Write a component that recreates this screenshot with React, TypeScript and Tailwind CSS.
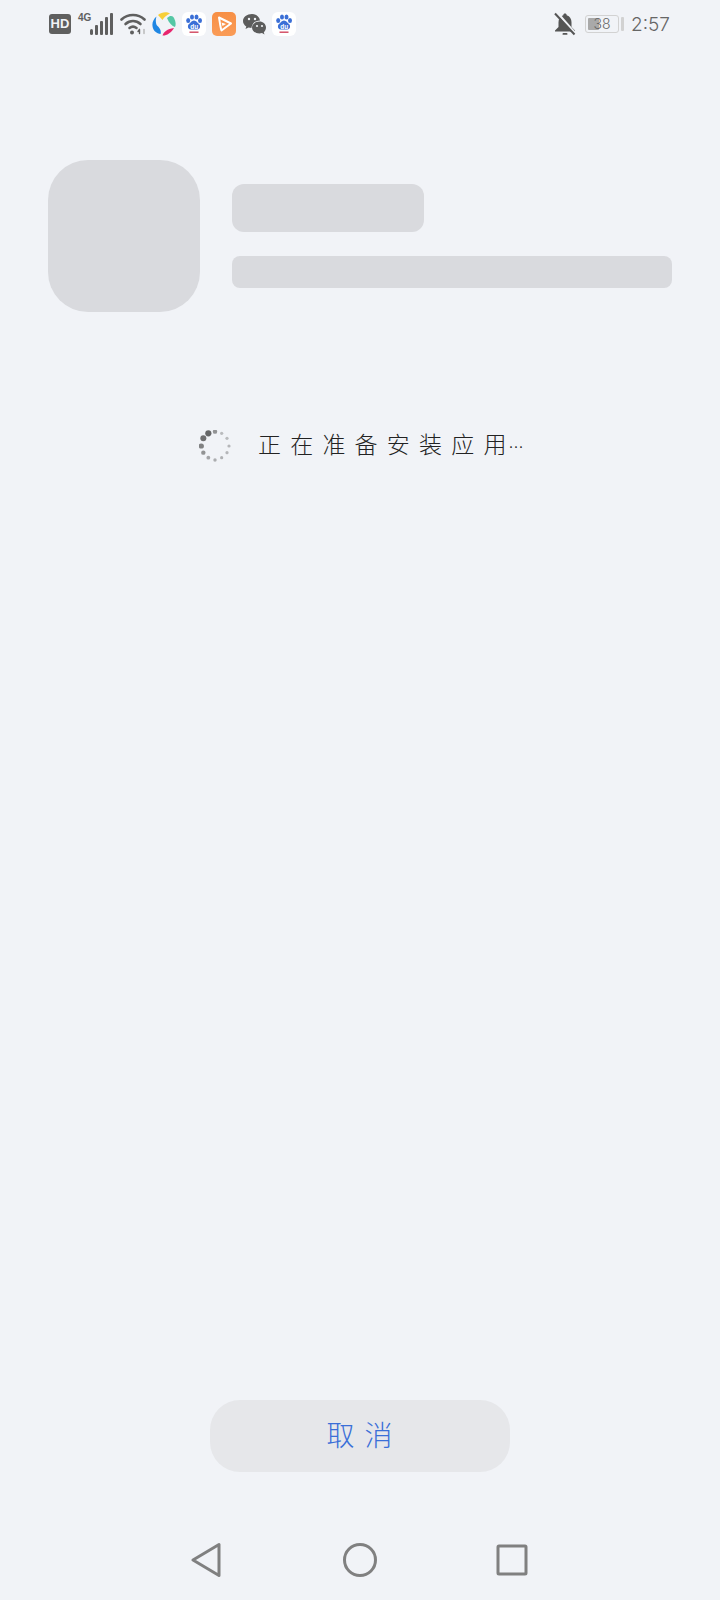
import React from 'react';

const CJK = '[font-family:"Noto_Sans_CJK_SC","Noto_Sans_CJK_TC",sans-serif]';

const spinnerDots = [
  { x: 77, y: 32, r: 2.2, o: 0.55 },
  { x: 57, y: 37, r: 3.1, o: 0.8 },
  { x: 42, y: 52, r: 3, o: 0.75 },
  { x: 36, y: 75, r: 2.6, o: 0.65 },
  { x: 42, y: 95, r: 2.2, o: 0.55 },
  { x: 57, y: 110, r: 1.9, o: 0.45 },
  { x: 77, y: 117, r: 1.7, o: 0.4 },
  { x: 97, y: 110, r: 1.6, o: 0.38 },
  { x: 113, y: 95, r: 1.6, o: 0.35 },
  { x: 119, y: 75, r: 1.6, o: 0.35 },
  { x: 113, y: 52, r: 1.6, o: 0.32 },
  { x: 97, y: 37, r: 1.6, o: 0.32 },
];

const Spinner = () => (
  <svg width="32" height="32" viewBox="29 27 96 96" className="shrink-0">
    {spinnerDots.map((d, i) => (
      <circle key={i} cx={d.x} cy={d.y} r={d.r * 3} fill="#444" opacity={d.o} />
    ))}
  </svg>
);

const SignalBars = () => (
  <svg width="23" height="22" viewBox="0 0 23 22" fill="#5f5f5f" className="shrink-0">
    <rect x="0" y="16" width="3" height="6" rx="1.5" />
    <rect x="5" y="12" width="3" height="10" rx="1" />
    <rect x="10" y="8" width="3" height="14" rx="1" />
    <rect x="15" y="4" width="3" height="18" rx="1" />
    <rect x="20" y="0" width="3" height="22" rx="1" />
  </svg>
);

const Wifi = () => (
  <svg width="27" height="22" viewBox="0 0 27 22" fill="none" stroke="#5f5f5f" strokeWidth="2.6" strokeLinecap="round" className="shrink-0">
    <path d="M1.5 6.5C8 0.5 18 0.5 24.5 6.5" />
    <path d="M5.5 11C10 7 16 7 20.5 11" />
    <path d="M9.5 15C11.5 13.5 14.5 13.5 16.5 15" />
    <circle cx="12" cy="19.5" r="2" fill="#5f5f5f" stroke="none" />
    <path d="M19.5 16.5v4M18 18.5l1.5 -2" strokeWidth="1.4" />
    <path d="M24 16.5v4" stroke="#b5b5b5" strokeWidth="1.4" />
  </svg>
);

const ColorSheet = () => (
  <svg width="24" height="24" viewBox="0 0 24 24" className="shrink-0">
    <path d="M6 3C10 -0.5 15 -0.5 18 1.5C15 3 12 5 10.5 8Z" fill="#f7cf38" />
    <path d="M15 6C18 3 21 3.5 22 6C24 10 24 13 23 15C20 14 17 11 15 6Z" fill="#55c7a5" />
    <path d="M22 16C19 21 14 24 10.5 23.5C12 19.5 15 17 22 16Z" fill="#e8246d" />
    <path d="M4.5 4.5C0 8.5 -1 14 2.5 19C4.5 21 7 22 8.5 22C9.5 19 8 16 5 13.5C3.5 11 3.5 7 4.5 4.5Z" fill="#1f86e3" />
  </svg>
);

const BaiduIcon = () => (
  <div className="relative h-6 w-6 shrink-0 rounded-[6px] bg-white">
    <svg width="24" height="24" viewBox="0 0 24 24" fill="#3b6fd6" className="absolute inset-0">
      <ellipse cx="6.2" cy="8.6" rx="2" ry="2.5" />
      <ellipse cx="10" cy="5" rx="2" ry="2.6" />
      <ellipse cx="14.5" cy="5" rx="2" ry="2.6" />
      <ellipse cx="18" cy="8.6" rx="2" ry="2.5" />
      <path d="M12 8.5c2.5 0 3.3 2.3 5 3.5 1.6 1.2 1.6 5.5 -1.8 5.5H8.8c-3.4 0 -3.4 -4.3 -1.8 -5.5 1.7 -1.2 2.5 -3.5 5 -3.5Z" />
      <rect x="7.5" y="19.5" width="9" height="1.4" fill="#d1455e" />
    </svg>
    <span className="absolute inset-x-0 top-[10.5px] text-center font-['Liberation_Sans',sans-serif] text-[6.5px] leading-[7px] font-bold text-white">du</span>
  </div>
);

const OrangeIcon = () => (
  <svg width="24" height="24" viewBox="0 0 24 24" className="shrink-0">
    <defs>
      <linearGradient id="orange" x1="0" y1="0" x2="0" y2="1">
        <stop offset="0" stopColor="#f78f45" />
        <stop offset="1" stopColor="#fa9b57" />
      </linearGradient>
    </defs>
    <rect width="24" height="24" rx="5" fill="url(#orange)" />
    <path d="M7 5.5L19 11.5L9.5 18.5C8.5 16 8 11 7 5.5Z" fill="none" stroke="#fff" strokeWidth="2" strokeLinejoin="round" />
    <path d="M9.5 10.5L14 12L10.5 14Z" fill="#fff" />
  </svg>
);

const WeChat = () => (
  <svg width="24" height="22" viewBox="0 0 24 22" fill="#5c5c5c" className="shrink-0">
    <path d="M9 1c-5 0 -9 3 -9 7 0 2.3 1.3 4.2 3.3 5.5L2.5 16l3 -1.5c1 .3 2 .5 3 .5 0 0 .6 -7.5 8.5 -7.5C16.5 3.5 13 1 9 1Z" />
    <path d="M16.5 8.5c-4 0 -7.5 2.6 -7.5 6s3.500 6 7.500 6c.8 0 1.700 -.2 2.500 -.4l2.500 1.400 -.7 -2.300c1.400 -1 2.200 -3 2.200 -4.700 0 -3.400 -3 -6 -6.500 -6Z" />
    <circle cx="6" cy="6" r="1.2" fill="#f1f3f7" />
    <circle cx="12" cy="6" r="1.2" fill="#f1f3f7" />
    <circle cx="14" cy="13" r="1.1" fill="#f1f3f7" />
    <circle cx="19" cy="13" r="1.1" fill="#f1f3f7" />
  </svg>
);

const BellMuted = () => (
  <svg width="22" height="24" viewBox="0 0 22 24" fill="#555" className="shrink-0">
    <path d="M11 1.500c-1 0 -1.700 .7 -1.700 1.700 -3.300 1 -4.800 3.800 -4.800 7v4.800L1 18.500v1h20v-1l-3.500 -3.500v-4.800c0 -3.200 -1.500 -6 -4.800 -7 0 -1 -.7 -1.700 -1.700 -1.700Z" />
    <rect x="8.500" y="21" width="5" height="1.800" rx="0.9" />
    <path d="M3 0.500L21 21" stroke="#f1f3f7" strokeWidth="2.500" />
    <path d="M1 1.500L20.500 22.500" stroke="#555" strokeWidth="2" />
  </svg>
);

const Battery = () => (
  <div className="flex shrink-0 items-center gap-[2px]">
    <div className="relative flex h-[18px] w-[34px] items-center justify-center overflow-hidden rounded-[3px] border border-[#d2d2d2]">
      <div className="absolute inset-y-[2px] left-[2px] w-[11px] rounded-[1px] bg-[#a9a9a9]" />
      <span className="relative font-['Inter',sans-serif] text-[14px] leading-none font-light text-[#666]">38</span>
    </div>
    <div className="h-[14px] w-[3px] rounded-[1px] bg-[#d2d2d2]" />
  </div>
);

const StatusBar = () => (
  <div className="flex h-12 shrink-0 items-center justify-between pr-[50px] pl-[49px]">
    <div className="flex items-center">
      <div className="flex h-5 w-[22px] items-center justify-center rounded-[3px] bg-[#5f5f5f] font-['Liberation_Sans',sans-serif] text-[13px] font-bold text-[#f1f3f7]">
        HD
      </div>
      <div className="mb-3 ml-[7px] font-['Liberation_Sans',sans-serif] text-[10px] leading-none font-bold text-[#5f5f5f]">4G</div>
      <div className="ml-[-1px]"><SignalBars /></div>
      <div className="ml-[7px]"><Wifi /></div>
      <div className="ml-[5px]"><ColorSheet /></div>
      <div className="ml-[6px]"><BaiduIcon /></div>
      <div className="ml-[6px]"><OrangeIcon /></div>
      <div className="ml-[7px]"><WeChat /></div>
      <div className="ml-[5px]"><BaiduIcon /></div>
    </div>
    <div className="flex items-center">
      <BellMuted />
      <div className="ml-[9px]"><Battery /></div>
      <span className="ml-[7px] font-['Inter',sans-serif] text-[19px] leading-none font-light text-[#666]">2:57</span>
    </div>
  </div>
);

const NavBar = () => (
  <div className="mt-[71px] flex h-[34px] items-center pl-[191px] text-[#808080]">
    <svg width="30" height="36" viewBox="0 0 30 36" fill="none" stroke="currentColor" strokeWidth="3" strokeLinejoin="round">
      <path d="M28 2.500V33.500L2 18Z" />
    </svg>
    <svg width="36" height="36" viewBox="0 0 36 36" fill="none" stroke="currentColor" strokeWidth="3" className="ml-[121px]">
      <circle cx="18" cy="18" r="15.500" />
    </svg>
    <svg width="32" height="32" viewBox="0 0 32 32" fill="none" stroke="currentColor" strokeWidth="3" strokeLinejoin="round" className="ml-[118px]">
      <rect x="2" y="2" width="28" height="28" rx="1" />
    </svg>
  </div>
);

export default function App() {
  return (
    <div className={`flex min-h-[1600px] flex-col bg-[#f1f3f7] ${CJK}`}>
      <StatusBar />

      <div className="mx-12 mt-28 flex gap-8">
        <div className="h-[152px] w-[152px] shrink-0 rounded-[40px] bg-[#d9dade]" />
        <div className="flex flex-1 flex-col gap-6 pt-6">
          <div className="h-12 w-[192px] rounded-[12px] bg-[#d9dade]" />
          <div className="h-8 w-full rounded-[8px] bg-[#d9dade]" />
        </div>
      </div>

      <div className="mt-[118px] flex h-8 items-center pl-[199px]">
        <Spinner />
        <span className="ml-[27px] pb-[2px] text-[23px] leading-8 font-light whitespace-nowrap text-[#222]">
          <span className="tracking-[9.2px]">正在准备安装应</span>用<span className="ml-[2px] text-[15px]">…</span>
        </span>
      </div>

      <div className="flex-1" />

      <button className="mx-auto flex h-[72px] w-[300px] items-center justify-center rounded-[30px] bg-[#e6e7ea] pb-1 pl-[9px] text-[28px] font-light tracking-[10px] text-[#3a6fd8]">
        取消
      </button>

      <NavBar />
      <div className="h-[23px]" />
    </div>
  );
}
